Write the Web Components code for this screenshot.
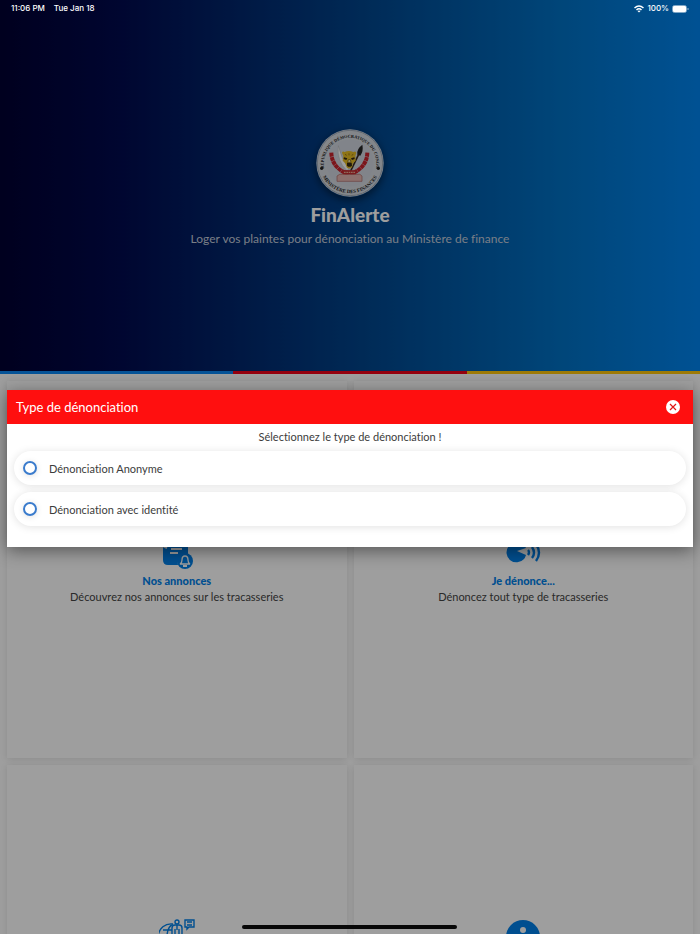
<!DOCTYPE html>
<html lang="fr">
<head>
<meta charset="utf-8">
<meta name="viewport" content="width=device-width, initial-scale=1">
<title>FinAlerte</title>
<style>
  html, body {
    height: 100%;
    margin: 0;
  }
  body {
    font-family: Lato, "Liberation Sans", sans-serif;
    font-variant-ligatures: none;
    overflow: hidden;
  }
</style>
</head>
<body>
<fin-app>
  <app-hero slot="hero" heading="FinAlerte">Loger vos plaintes pour dénonciation au Ministère de finance</app-hero>
  <menu-card heading="Nos annonces">
    <svg slot="icon" width="34" height="36" viewBox="0 0 34 36" aria-hidden="true">
      <path d="M3 3h25v16a9 9 0 0 0-10 11H8q-5 0-5-5z" fill="#0080e8"/>
      <path d="M3 11l4 2" stroke="#fff" stroke-width="2"/>
      <path d="M11 14h11M10 18h8" stroke="#fff" stroke-width="2"/>
      <circle cx="25" cy="26" r="8" fill="#0080e8"/>
      <path d="M20 29q2-1 2-4 0-4 3-4t3 4q0 3 2 4z" fill="none" stroke="#fff" stroke-width="1.3"/>
      <path d="M23 31h4" stroke="#fff" stroke-width="2"/>
    </svg>
    Découvrez nos annonces sur les tracasseries
  </menu-card>
  <menu-card heading="Je dénonce...">
    <svg slot="icon" width="36" height="36" viewBox="0 0 36 36" aria-hidden="true">
      <path d="M17 9A10 10 0 1 0 19 24q1-1 2-4l-9-4 9-3q-1-3-4-4z" fill="#0080e8"/>
      <path d="M23 15q2 2 0 5M27 12q4 6 0 11M31 9q6 9 0 17" fill="none" stroke="#0080e8" stroke-width="2.4"/>
    </svg>
    Dénoncez tout type de tracasseries
  </menu-card>
  <menu-card>
    <svg slot="icon" width="36" height="36" viewBox="0 0 36 36" aria-hidden="true" fill="none" stroke="#0080e8" stroke-width="1.4">
      <path d="M14 5A13 13 0 1 0 25 16M14 5Q8 8 8 18t6 12M4 11h9M2 18h10"/>
      <circle cx="18" cy="3" r="2"/>
      <path d="M13 18v-9q0-3 3-3h4q3 0 3 3v9M16 10v18M20 10v18M18 6v5"/>
      <path d="M26 1h9v7h-5l-2 2V8h-2zM28 3h5M28 6h5"/>
    </svg>
  </menu-card>
  <menu-card>
    <svg slot="icon" width="36" height="36" viewBox="0 0 36 36" aria-hidden="true">
      <circle cx="18" cy="18" r="17" fill="#0080e8"/>
      <circle cx="18" cy="11" r="3" fill="#fff"/>
      <path d="M15 17h5v11h-5z" fill="#fff"/>
    </svg>
  </menu-card>
  <choice-dialog slot="dialog" heading="Type de dénonciation" options="Dénonciation Anonyme|Dénonciation avec identité">Sélectionnez le type de dénonciation !</choice-dialog>
  <status-bar slot="status" time="11:06 PM" date="Tue Jan 18" battery="100%"></status-bar>
</fin-app>

<script>
// Page shell: hero on top, card grid below, dialog over both
class FinApp extends HTMLElement {
  constructor() {
    super();
    this.attachShadow({ mode: 'open' });
  }

  connectedCallback() {
    this.shadowRoot.innerHTML = `
      <style>
        :host {
          display: block;
          position: relative;
          height: 100vh;
          overflow: hidden;
          background: #fff;
        }
        main {
          display: grid;
          grid-template-columns: 1fr 1fr;
          gap: 7px;
          padding: 7px;
        }
        .overlay {
          position: absolute;
          inset: 0;
          display: flex;
          align-items: center;
          padding: 3px 7px 0;
          background: rgba(0, 0, 0, 0.38);
        }
        .overlay ::slotted(*) {
          flex: 1;
        }
        .top {
          position: absolute;
          inset: 0 0 auto;
        }
        .home {
          position: absolute;
          bottom: 5px;
          left: 50%;
          width: 215px;
          height: 4px;
          margin-left: -108px;
          border-radius: 2px;
          background: #080808;
        }
      </style>
      <slot name="hero"></slot>
      <main><slot></slot></main>
      <div class="overlay"><slot name="dialog"></slot></div>
      <div class="top"><slot name="status"></slot></div>
      <div class="home"></div>
    `;
  }
}

// Device status line
class StatusBar extends HTMLElement {
  constructor() {
    super();
    this.attachShadow({ mode: 'open' });
  }

  connectedCallback() {
    this.shadowRoot.innerHTML = `
      <style>
        :host {
          display: flex;
          align-items: center;
          gap: 9px;
          padding: 3px 11px;
          font: 500 8px/11px Inter, "Liberation Sans", sans-serif;
          color: #fff;
        }
        .right {
          display: flex;
          align-items: center;
          gap: 3px;
          margin-left: auto;
        }
      </style>
      <span>${this.getAttribute('time')}</span>
      <span>${this.getAttribute('date')}</span>
      <div class="right">
        <svg width="10" height="8" viewBox="0 0 20 16" fill="none" stroke="#fff" stroke-width="3" aria-hidden="true">
          <path d="M1 6q9-8 18 0M5 10q5-5 10 0"/>
          <path d="M7 12q3-2 6 0l-3 3z" fill="#fff" stroke="none"/>
        </svg>
        <span>${this.getAttribute('battery')}</span>
        <svg width="17" height="8" viewBox="0 0 17 8" aria-hidden="true">
          <rect x="0.5" y="0.5" width="14" height="7" rx="2" fill="none" stroke="#fff" stroke-opacity="0.5"/>
          <rect x="1" y="1" width="13" height="6" rx="1" fill="#fff"/>
          <path d="M16 3v2" stroke="#fff" stroke-opacity="0.6"/>
        </svg>
      </div>
    `;
  }
}

// Ministry seal
class MinistrySeal extends HTMLElement {
  constructor() {
    super();
    this.attachShadow({ mode: 'open' });
  }

  connectedCallback() {
    this.shadowRoot.innerHTML = `
      <style>
        :host {
          display: block;
          width: 68px;
          height: 68px;
          border-radius: 50%;
          box-shadow: 0 3px 8px rgba(0, 0, 0, 0.5);
        }
        svg {
          display: block;
        }
        text {
          font-family: "Liberation Serif", serif;
          font-weight: bold;
          fill: #1c1c1c;
        }
      </style>
      <svg width="68" height="68" viewBox="0 0 204 204" role="img" aria-label="Ministère des Finances">
        <defs>
          <path id="top" d="M24 118A79 79 0 1 1 180 118"/>
          <path id="bottom" d="M22 146A92 92 0 0 0 182 146"/>
        </defs>
        <circle cx="102" cy="102" r="101" fill="#d3d8df"/>
        <circle cx="102" cy="102" r="98" fill="none" stroke="#8d99a8" stroke-width="2"/>
        <circle cx="102" cy="102" r="70" fill="#d0d6df"/>
        <text font-size="13"><textPath href="#top" startOffset="50%" text-anchor="middle">RÉPUBLIQUE DÉMOCRATIQUE DU CONGO</textPath></text>
        <text font-size="15"><textPath href="#bottom" startOffset="50%" text-anchor="middle">MINISTÈRE DES FINANCES</textPath></text>
        <circle cx="17" cy="118" r="5" fill="#222"/>
        <circle cx="187" cy="118" r="5" fill="#222"/>
        <path d="M46 71Q47 110 84 130L98 136" fill="none" stroke="#c8222c" stroke-width="12" stroke-dasharray="12 1"/>
        <path d="M154 71Q153 110 116 130L102 136" fill="none" stroke="#c8222c" stroke-width="12" stroke-dasharray="12 1"/>
        <path d="M67 50Q74 86 98 119L93 125Q62 96 67 50z" fill="#fff" stroke="#a7a7a7"/>
        <path d="M139 47Q121 60 124 77l9 3q10-14 6-33z" fill="#262626"/>
        <path d="M128 76L104 126" stroke="#3b2a22" stroke-width="5"/>
        <path d="M78 71q2-6 8-2 12-6 26 0 6-4 9 2l-3 10 1 14-8 8-3 12q-9 7-16 0l-4-12-8-8 2-14z" fill="#e5bb25"/>
        <path d="M84 85l10 3-3 5-8-3zM115 85l-10 3 3 5 8-3zM93 101h14l1 9q-8 7-15 0z" fill="#342711"/>
        <path d="M97 92h6l2 8H95zM87 76l5 3M99 73v6M112 76l-5 3" fill="#fff4b0" stroke="#70540c" stroke-width="2"/>
        <path d="M63 141q7-8 20-5h37q14-3 18 5v16H63z" fill="#e2b5b0" stroke="#aa6662" stroke-width="2"/>
        <path d="M79 123l43 1-3 12H81z" fill="#c33033"/>
        <path d="M84 130h33" stroke="#f0c4a6" stroke-width="3" stroke-dasharray="5 2"/>
      </svg>
    `;
  }
}

// Header with seal, name and tagline, closed by the three-colour rule
class AppHero extends HTMLElement {
  constructor() {
    super();
    this.attachShadow({ mode: 'open' });
  }

  connectedCallback() {
    this.shadowRoot.innerHTML = `
      <style>
        :host {
          display: flex;
          flex-direction: column;
          height: 40vh;
          background: linear-gradient(to right, #000032, #000a4e 17%, #00458c 52%, #0071c4 80%, #0084ee);
        }
        header {
          flex: 1;
          display: flex;
          flex-direction: column;
          align-items: center;
          justify-content: center;
          padding-top: 7px;
          text-align: center;
        }
        h1 {
          margin: 7px 0 0;
          font-size: 19px;
          font-weight: 900;
          line-height: 22px;
          color: #fff;
        }
        p {
          margin: 4px 0 0;
          font-size: 12px;
          line-height: 18px;
          color: #c3cbd9;
        }
        .rule {
          display: grid;
          grid-template-columns: repeat(3, 1fr);
          height: 3px;
        }
        .blue { background: #0a86f4; }
        .red { background: #f00018; }
        .yellow { background: #ffc60a; }
      </style>
      <header>
        <ministry-seal></ministry-seal>
        <h1>${this.getAttribute('heading')}</h1>
        <p><slot></slot></p>
      </header>
      <div class="rule"><i class="blue"></i><i class="red"></i><i class="yellow"></i></div>
    `;
  }
}

// Menu tile
class MenuCard extends HTMLElement {
  constructor() {
    super();
    this.attachShadow({ mode: 'open' });
  }

  connectedCallback() {
    this.shadowRoot.innerHTML = `
      <style>
        :host {
          display: flex;
          flex-direction: column;
          align-items: center;
          justify-content: center;
          aspect-ratio: 9 / 10;
          background: #fff;
          box-shadow: 0 1px 7px rgba(0, 0, 0, 0.12);
          text-align: center;
        }
        h2 {
          min-height: 16px;
          margin: 2px 0 0;
          font-size: 11px;
          font-weight: 900;
          line-height: 16px;
          color: #0080e8;
        }
        p {
          min-height: 15px;
          margin: 0;
          font-size: 11px;
          line-height: 15px;
          color: #444;
        }
      </style>
      <slot name="icon"></slot>
      <h2>${this.getAttribute('heading') || ''}</h2>
      <p><slot></slot></p>
    `;
  }
}

// Dialog with a list of radio choices
class ChoiceDialog extends HTMLElement {
  constructor() {
    super();
    this.attachShadow({ mode: 'open' });
  }

  connectedCallback() {
    const heading = this.getAttribute('heading');
    const options = this.getAttribute('options').split('|');

    this.shadowRoot.innerHTML = `
      <style>
        :host {
          display: block;
          background: #fff;
          box-shadow: 0 4px 16px rgba(0, 0, 0, 0.45);
        }
        header {
          display: flex;
          align-items: center;
          justify-content: space-between;
          height: 34px;
          padding: 0 12px 0 9px;
          background: #ff0f0f;
          color: #fff;
        }
        h2 {
          margin: 0;
          font-size: 13px;
          font-weight: 400;
        }
        button {
          display: flex;
          padding: 0;
          border: none;
          background: none;
          cursor: pointer;
        }
        fieldset {
          display: flex;
          flex-direction: column;
          gap: 7px;
          margin: 0;
          padding: 6px 7px 21px;
          border: none;
          font-size: 11px;
          color: #3c3c3c;
        }
        p {
          margin: 0;
          line-height: 14px;
          text-align: center;
        }
        label {
          display: flex;
          align-items: center;
          gap: 12px;
          height: 34px;
          padding: 0 9px;
          border-radius: 17px;
          background: #fff;
          box-shadow: 0 1px 8px rgba(0, 0, 0, 0.12);
          cursor: pointer;
        }
        input {
          appearance: none;
          width: 14px;
          height: 14px;
          margin: 0;
          border: 2px solid #3a7bcc;
          border-radius: 50%;
          box-shadow: 0 1px 6px rgba(0, 0, 0, 0.12);
        }
        input:checked {
          background: #3a7bcc;
        }
      </style>
      <header>
        <h2>${heading}</h2>
        <button type="button" aria-label="Fermer">
          <svg width="16" height="16" viewBox="0 0 16 16" aria-hidden="true">
            <circle cx="8" cy="8" r="7" fill="#fff"/>
            <path d="M5 5l6 6M11 5l-6 6" stroke="#e01515" stroke-width="1.2"/>
          </svg>
        </button>
      </header>
      <fieldset aria-label="${heading}">
        <p><slot></slot></p>
        ${options.map((text) => `<label><input type="radio" name="type" value="${text}"><span>${text}</span></label>`).join('')}
      </fieldset>
    `;
    this.shadowRoot.querySelector('button').addEventListener('click', () => this.remove());
  }
}

customElements.define('fin-app', FinApp);
customElements.define('status-bar', StatusBar);
customElements.define('ministry-seal', MinistrySeal);
customElements.define('app-hero', AppHero);
customElements.define('menu-card', MenuCard);
customElements.define('choice-dialog', ChoiceDialog);
</script>
</body>
</html>
